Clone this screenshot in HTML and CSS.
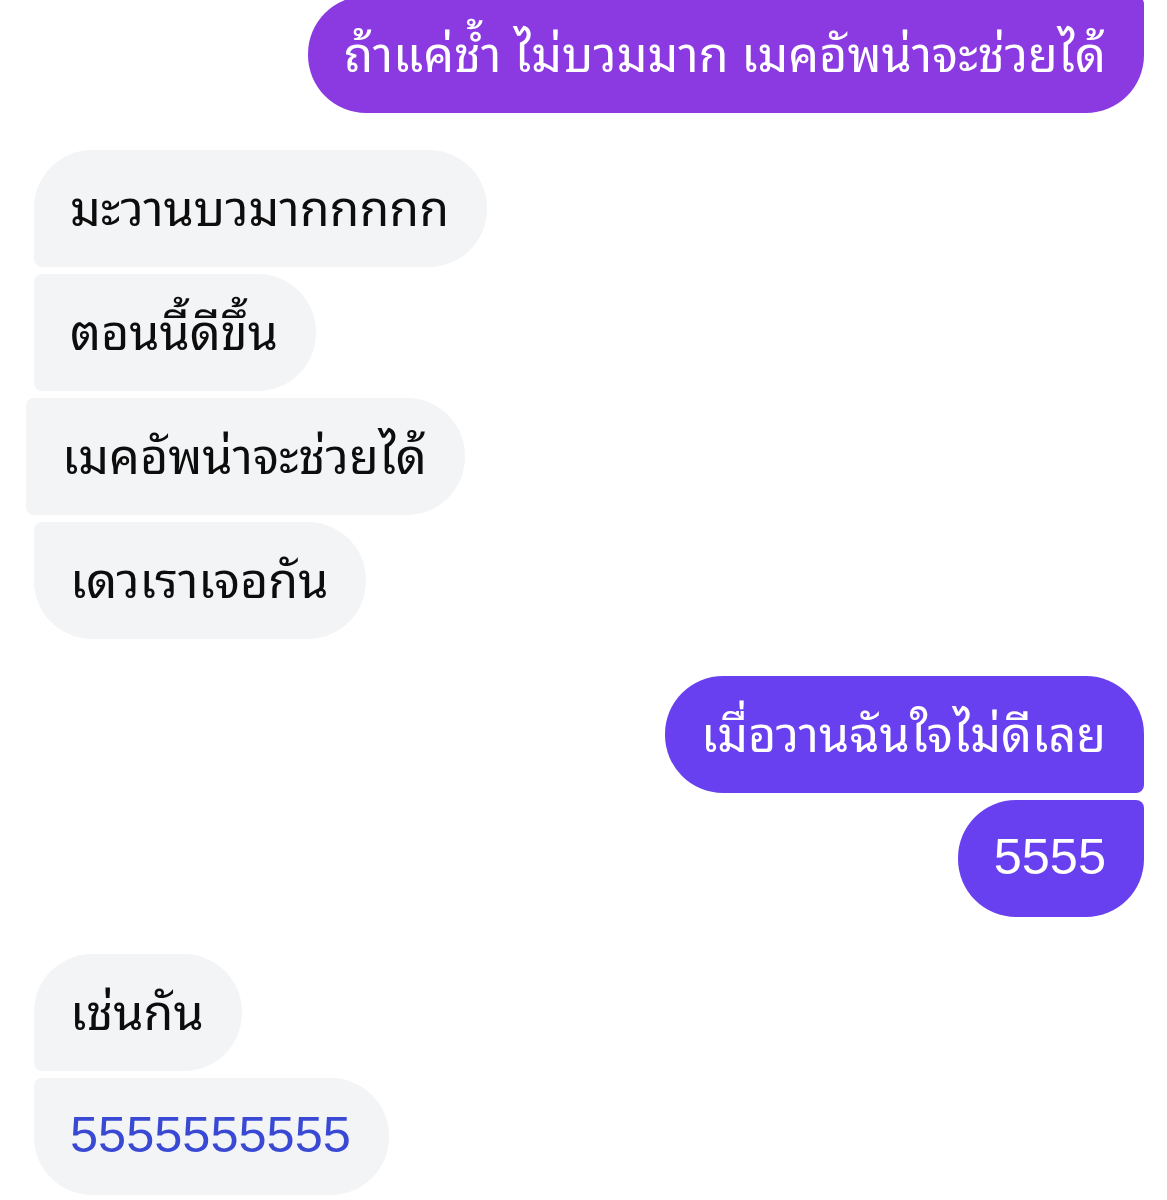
FILE: index.html
```html
<!DOCTYPE html>
<html lang="th">
<head>
<meta charset="utf-8">
<link rel="stylesheet" href="styles.css">
</head>
<body>
<div class="chat">
  <div class="group out first-group">
    <div class="bubble out-a last">ถ้าแค่ช้ำ ไม่บวมมาก เมคอัพน่าจะช่วยได้</div>
  </div>
  <div class="group in">
    <div class="bubble first">มะวานบวมากกกกก</div>
    <div class="bubble mid">ตอนนี้ดีขึ้น</div>
    <div class="bubble mid shift">เมคอัพน่าจะช่วยได้</div>
    <div class="bubble last">เดวเราเจอกัน</div>
  </div>
  <div class="group out">
    <div class="bubble out-b first">เมื่อวานฉันใจไม่ดีเลย</div>
    <div class="bubble out-b last num">5555</div>
  </div>
  <div class="group in">
    <div class="bubble first">เช่นกัน</div>
    <div class="bubble last num link">5555555555</div>
  </div>
</div>
</body>
</html>
```

FILE: styles.css
```css
html, body {
  margin: 0;
  padding: 0;
  background: #ffffff;
}
body {
  font-family: "Noto Sans Thai Looped", "Thonburi", "Loma", "Garuda", "Noto Sans Thai", "Noto Sans", "Liberation Sans", sans-serif;
  overflow: hidden;
}
.chat {
  display: flex;
  flex-direction: column;
  gap: 37px;
  padding: 0 23px 0 34px;
  margin-top: -4px;
}
.group {
  display: flex;
  flex-direction: column;
  gap: 7px;
}
.group.in { align-items: flex-start; }
.group.out { align-items: flex-end; }
.bubble {
  box-sizing: border-box;
  height: 117px;
  display: flex;
  align-items: center;
  padding: 0 38px 8px 36px;
  font-size: 48.5px;
  line-height: 1;
  white-space: nowrap;
  background: #f3f4f6;
  color: #0d0d0d;
  border-radius: 58px;
}
.num {
  font-family: "Liberation Sans", "Noto Sans", sans-serif;
  font-size: 50.5px;
  padding-bottom: 3px;
}
.link { color: #3a49d4; }
.shift { margin-left: -8px; }
.group.in .first { border-bottom-left-radius: 8px; }
.group.in .mid { border-top-left-radius: 8px; border-bottom-left-radius: 8px; }
.group.in .last { border-top-left-radius: 8px; }
.out-a, .out-b { color: #ffffff; }
.out-a { background: #8a3ae0; }
.out-b { background: #6940f0; }
.group.out .first { border-bottom-right-radius: 8px; }
.group.out .last { border-top-right-radius: 8px; }
```
